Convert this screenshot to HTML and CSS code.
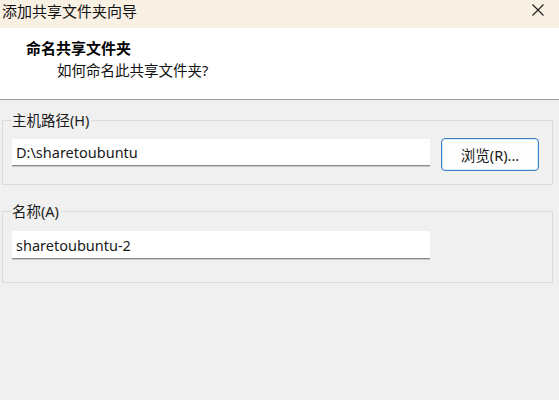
FILE: index.html
```html
<!DOCTYPE html>
<html lang="zh-CN">
<head>
<meta charset="utf-8">
<title>添加共享文件夹向导</title>
<link rel="stylesheet" href="styles.css">
</head>
<body>
<div class="window">
  <div class="titlebar">
    <span class="title">添加共享文件夹向导</span>
    <span class="close" aria-label="关闭">
      <svg width="12" height="12" viewBox="0 0 12 12"><path d="M0.5 0.5 L11.5 11.5 M11.5 0.5 L0.5 11.5" stroke="#1b1b1b" stroke-width="1.1" fill="none"/></svg>
    </span>
  </div>
  <div class="header">
    <div class="header-title">命名共享文件夹</div>
    <div class="header-sub">如何命名此共享文件夹?</div>
  </div>
  <div class="content">
    <fieldset class="group group-path">
      <legend>主机路径(H)</legend>
      <div class="row">
        <div class="input input-path">D:\sharetoubuntu</div>
        <button class="btn">浏览(R)...</button>
      </div>
    </fieldset>
    <fieldset class="group group-name">
      <legend>名称(A)</legend>
      <div class="row">
        <div class="input input-name">sharetoubuntu-2</div>
      </div>
    </fieldset>
  </div>
</div>
</body>
</html>
```

FILE: styles.css
```css
* { box-sizing: border-box; }
html, body {
  margin: 0;
  padding: 0;
}
body {
  width: 559px;
  height: 400px;
  overflow: hidden;
  background: #f0f0f0;
  font-family: "Noto Sans", "Noto Sans CJK SC", sans-serif;
  color: #1a1a1a;
}
.window {
  display: flex;
  flex-direction: column;
  height: 400px;
}
.titlebar {
  height: 28px;
  background: #f9f0e4;
  display: flex;
  align-items: flex-start;
  justify-content: space-between;
  padding: 0 0 0 2px;
}
.title {
  font-size: 15px;
  line-height: 20px;
  padding-top: 1px;
  color: #111;
}
.close {
  width: 12px;
  height: 12px;
  margin: 4px 15px 0 0;
  display: block;
}
.close svg { display: block; }
.header {
  height: 72px;
  background: #ffffff;
  padding-top: 10px;
  border-bottom: 1px solid #a0a0a0;
  display: flex;
  flex-direction: column;
  gap: 2px;
}
.header-title {
  font-weight: 700;
  font-size: 15px;
  line-height: 20px;
  padding-left: 26px;
  color: #000;
}
.header-sub {
  font-size: 14.5px;
  line-height: 20px;
  padding-left: 57px;
  color: #111;
}
.content {
  padding: 10px 6px 0 2px;
  display: flex;
  flex-direction: column;
}
.group {
  margin: 0;
  border: 1px solid #dcdcdc;
  padding: 0 13px 0 9px;
  min-width: 0;
}
.group legend {
  font-size: 14.5px;
  line-height: 20px;
  padding: 0 2px 0 0;
  margin-left: 0;
  color: #1a1a1a;
}
.group-path {
  padding-bottom: 13px;
}
.group-path .row {
  margin-top: 8px;
}
.group-name {
  margin-top: 16px;
  padding-bottom: 23px;
}
.group-name .row {
  margin-top: 10px;
}
.row {
  display: flex;
  align-items: flex-start;
  gap: 11px;
}
.input {
  width: 418px;
  background: #ffffff;
  border-bottom: 1px solid #8c8c8c;
  box-shadow: 0 1px 0 #c8c8c8;
  font-size: 14.5px;
  padding-left: 4px;
  color: #1a1a1a;
  display: flex;
  align-items: center;
}
.input-path {
  height: 27px;
  margin-top: 1px;
}
.input-name {
  height: 28px;
}
.btn {
  width: 98px;
  height: 33px;
  border: 1px solid #3d7fc3;
  border-radius: 4px;
  background: #fdfdfd;
  box-shadow: inset 0 0 0 1px #d9ebf8;
  font-family: "Noto Sans", "Noto Sans CJK SC", sans-serif;
  font-size: 14.5px;
  color: #1a1a1a;
  padding: 0;
}
```
